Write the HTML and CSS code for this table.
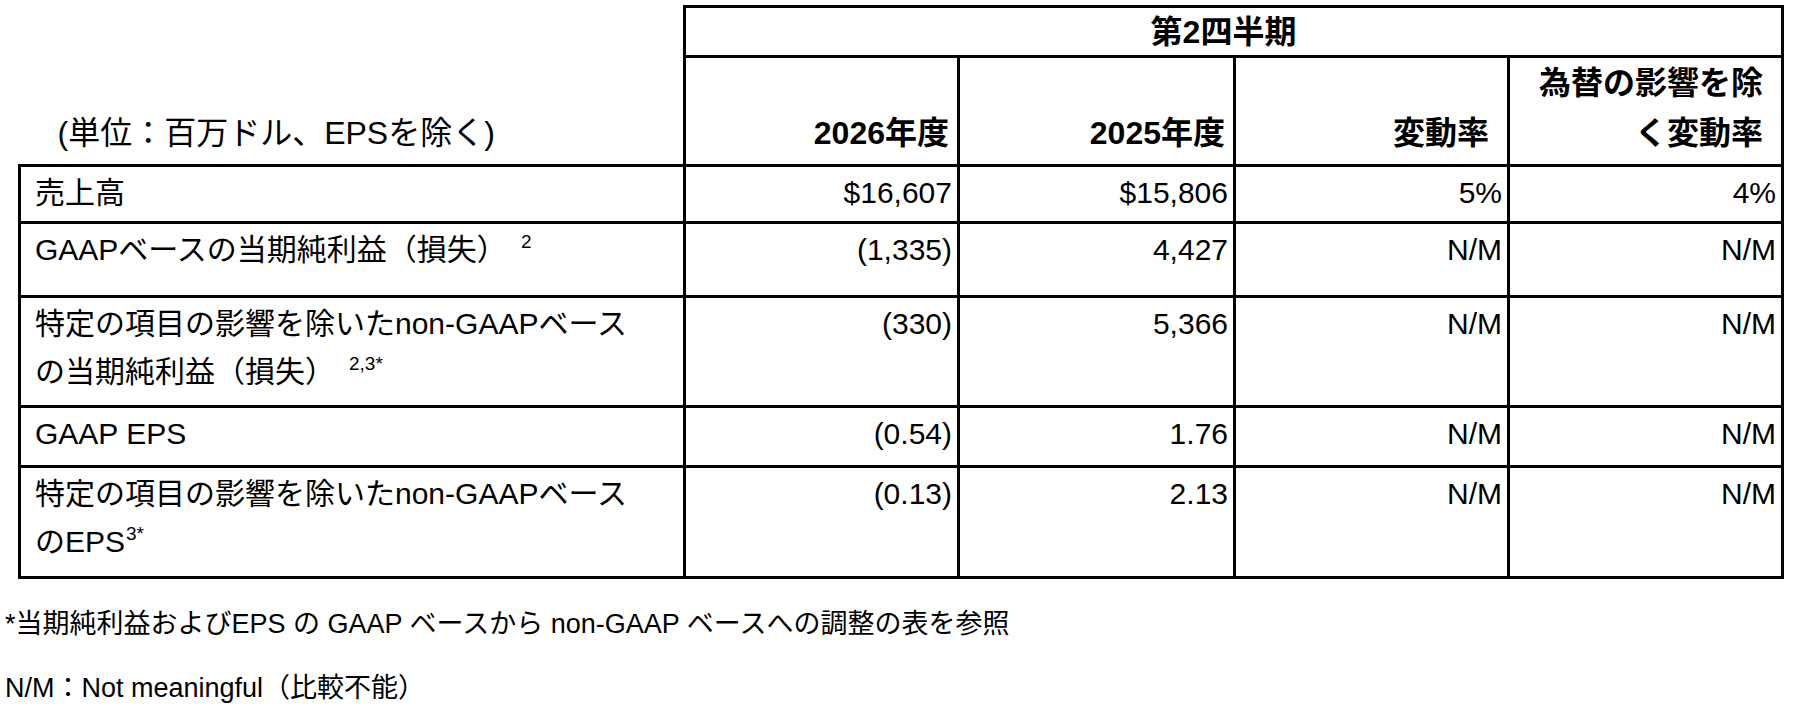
FILE: index.html
```html
<!DOCTYPE html>
<html lang="ja">
<head>
<meta charset="utf-8">
<title>第2四半期</title>
<link rel="stylesheet" href="styles.css">
</head>
<body>
<div class="page">
  <table class="fin">
    <colgroup>
      <col class="c-label">
      <col class="c-val">
      <col class="c-val c-wide">
      <col class="c-val">
      <col class="c-val">
    </colgroup>
    <thead>
      <tr class="h1">
        <th class="corner" rowspan="2">(単位：百万ドル、EPSを除く)</th>
        <th class="period" colspan="4">第2四半期</th>
      </tr>
      <tr class="h2">
        <th>2026年度</th>
        <th>2025年度</th>
        <th class="wide-pad">変動率</th>
        <th class="wide-pad">為替の影響を除<br>く変動率</th>
      </tr>
    </thead>
    <tbody>
      <tr class="r1">
        <td class="label">売上高</td>
        <td>$16,607</td>
        <td>$15,806</td>
        <td>5%</td>
        <td>4%</td>
      </tr>
      <tr class="r2">
        <td class="label">GAAPベースの当期純利益（損失）<sup>2</sup></td>
        <td>(1,335)</td>
        <td>4,427</td>
        <td>N/M</td>
        <td>N/M</td>
      </tr>
      <tr class="r3">
        <td class="label">特定の項目の影響を除いたnon-GAAPベース<br>の当期純利益（損失）<sup>2,3*</sup></td>
        <td>(330)</td>
        <td>5,366</td>
        <td>N/M</td>
        <td>N/M</td>
      </tr>
      <tr class="r4">
        <td class="label">GAAP EPS</td>
        <td>(0.54)</td>
        <td>1.76</td>
        <td>N/M</td>
        <td>N/M</td>
      </tr>
      <tr class="r5">
        <td class="label">特定の項目の影響を除いたnon-GAAPベース<br>のEPS<sup class="tight">3*</sup></td>
        <td>(0.13)</td>
        <td>2.13</td>
        <td>N/M</td>
        <td>N/M</td>
      </tr>
    </tbody>
  </table>
  <div class="notes">
    <p class="note">*当期純利益およびEPS の GAAP ベースから non-GAAP ベースへの調整の表を参照</p>
    <p class="note">N/M：Not meaningful（比較不能）</p>
  </div>
</div>
</body>
</html>
```

FILE: styles.css
```css
html, body {
  margin: 0;
  padding: 0;
  background: #ffffff;
}

body {
  color: #000000;
  font-family: "Liberation Sans", "Noto Sans CJK JP", sans-serif;
}

.page {
  padding-top: 5px;
}

.fin {
  margin-left: 18px;
  border-collapse: collapse;
  table-layout: fixed;
  width: 1766px;
  font-size: 30px;
}

.c-label { width: 665px; }
.c-val { width: 274px; }
.c-wide { width: 276px; }

.fin th,
.fin td {
  border: 3px solid #000000;
  padding: 0;
}

.fin th {
  font-weight: 700;
  font-size: 32px;
}

.h1 { height: 50px; }
.h2 { height: 109px; }
.r1 { height: 57px; }
.r2 { height: 74px; }
.r3 { height: 110px; }
.r4 { height: 60px; }
.r5 { height: 111px; }

.fin .corner {
  border: none;
  font-weight: 400;
  text-align: left;
  vertical-align: bottom;
  padding: 0 0 6px 38px;
  line-height: 50px;
}

.fin .period {
  text-align: center;
  vertical-align: middle;
  line-height: 40px;
  padding-right: 20px;
}

.h2 th {
  text-align: right;
  vertical-align: bottom;
  line-height: 50px;
  padding: 0 8px 6px 6px;
}

.h2 th.wide-pad {
  padding-right: 18px;
}

.fin td {
  text-align: right;
  vertical-align: top;
  line-height: 48px;
  padding: 2px 5px 0 6px;
  font-weight: 400;
}

.fin td.label {
  text-align: left;
  padding-left: 14px;
}

sup {
  font-size: 19px;
  line-height: 0;
  vertical-align: 12px;
  margin-left: 14px;
}

sup.tight {
  margin-left: 1px;
}

.notes {
  padding: 13px 0 0 5px;
}

.note {
  margin: 0;
  font-size: 27px;
  line-height: 64px;
  white-space: nowrap;
}
```
